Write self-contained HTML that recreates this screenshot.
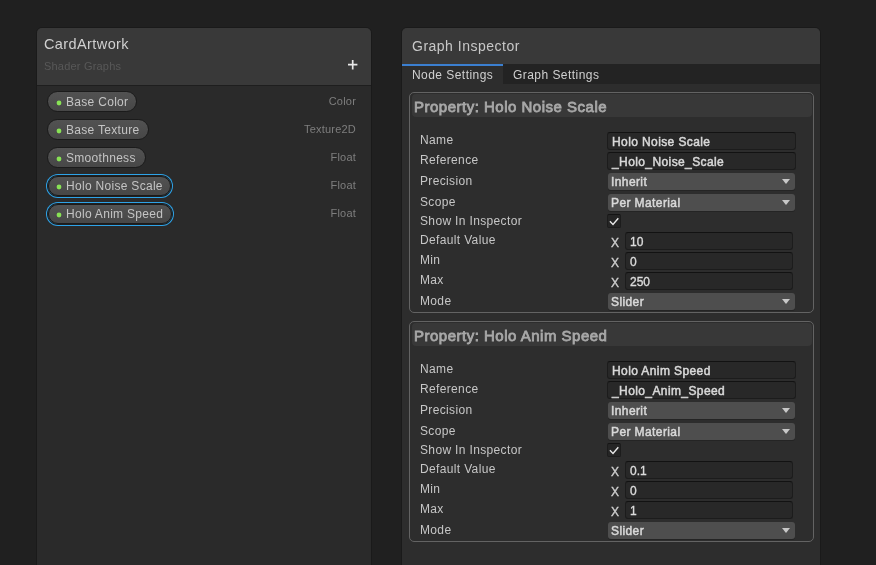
<!DOCTYPE html>
<html><head><meta charset="utf-8">
<style>
*{box-sizing:border-box;margin:0;padding:0}
html,body{width:876px;height:565px;overflow:hidden;background:#202020;font-family:"Liberation Sans",sans-serif;color:#d2d2d2}
#root{position:absolute;left:0;top:0;width:876px;height:565px;will-change:transform;background:#202020}
#lp{position:absolute;left:36px;top:27px;width:336px;height:560px;background:#2a2a2a;border:1px solid #1a1a1a;border-radius:6px;overflow:hidden}
#lph{position:absolute;left:0;top:0;width:100%;height:58px;background:#393939;border-bottom:1px solid #1e1e1e}
#lp .title{position:absolute;left:7px;top:8px;font-size:14.5px;letter-spacing:0.4px;color:#d0d0d0;white-space:nowrap}
#lp .sub{position:absolute;left:7px;top:32px;font-size:11px;letter-spacing:0.2px;color:#585858;white-space:nowrap}
#lp .plus{position:absolute;left:311px;top:32px;width:10px;height:10px}
.pill{position:absolute;left:10px;height:21px;border-radius:11px;background:linear-gradient(#525252,#474747);border:1px solid #1b1b1b;font-size:12px;letter-spacing:0.3px;color:#c4c4c4;padding-left:18px;line-height:20px;white-space:nowrap}
.pill .dot{position:absolute;left:8px;top:7.5px;width:6px;height:6px}
.pill.sel{left:11px;height:20px;border-radius:10px;padding-left:17px;line-height:18px;box-shadow:0 0 0 1px #1f1f1f,0 0 0 2px #2ea3e8}
.pill.sel .dot{left:7px;top:7px}
.type{position:absolute;right:15px;font-size:11px;letter-spacing:0.2px;color:#7e7e7e;white-space:nowrap}
#rp{position:absolute;left:401px;top:27px;width:420px;height:560px;background:#2d2d2d;border:1px solid #1a1a1a;border-radius:6px;overflow:hidden}
#rph{position:absolute;left:0;top:0;width:100%;height:36px;background:#393939}
#rph .title{position:absolute;left:10px;top:9.5px;font-size:14px;letter-spacing:0.5px;color:#c8c8c8;white-space:nowrap}
#tabs{position:absolute;left:0;top:36px;width:100%;height:20px;background:#232323}
.tab{position:absolute;top:0;height:20px;font-size:12px;letter-spacing:0.45px;color:#d0d0d0;line-height:22px;white-space:nowrap}
.tab.act{background:#2d2d2d;border-top:2px solid #3b7fd0;line-height:18px}
.box{position:absolute;left:7px;width:405px;height:221px;border:1px solid #636363;border-radius:5px}
.bh{position:absolute;left:2px;top:1px;right:1px;height:23px;background:#383838;border-radius:4px;font-size:15px;font-weight:normal;-webkit-text-stroke:0.8px #a8a8a8;letter-spacing:0.5px;color:#a8a8a8;padding-left:2px;line-height:25px;white-space:nowrap}
.lbl{position:absolute;left:10px;font-size:12px;letter-spacing:0.35px;color:#c6c6c6;white-space:nowrap}
.tf{position:absolute;left:197px;width:189px;height:18px;background:#282828;border:1px solid #1c1c1c;border-top-color:#121212;border-radius:3px;font-size:12px;font-weight:normal;-webkit-text-stroke:0.5px #d8d8d8;letter-spacing:0.4px;color:#d8d8d8;padding-left:4px;line-height:18px;white-space:nowrap}
.dd{position:absolute;left:198px;width:187px;height:17px;background:#4e4e4e;border-radius:3px;box-shadow:0 1px 0 #242424;font-size:12px;font-weight:normal;-webkit-text-stroke:0.5px #d8d8d8;letter-spacing:0.4px;color:#d8d8d8;padding-left:3px;line-height:19px;white-space:nowrap}
.dd:after{content:"";position:absolute;right:5px;top:6px;border-left:4px solid transparent;border-right:4px solid transparent;border-top:5px solid #c8c8c8}
.cb{position:absolute;left:197px;width:14px;height:14px;background:#252525;border:1px solid #1c1c1c;border-top-color:#141414;border-radius:2px}
.cb svg{position:absolute;left:1px;top:1px}
.xl{position:absolute;left:201px;font-size:12px;color:#d0d0d0;-webkit-text-stroke:0.35px #d0d0d0}
.nf{position:absolute;left:215px;width:168px;height:18px;background:#282828;border:1px solid #1c1c1c;border-top-color:#121212;border-radius:3px;font-size:12px;font-weight:normal;-webkit-text-stroke:0.35px #dcdcdc;color:#dcdcdc;padding-left:4px;line-height:19px;white-space:nowrap}
</style></head><body><div id="root">

<div id="lp">
  <div id="lph">
    <div class="title">CardArtwork</div>
    <div class="sub">Shader Graphs</div>
    <svg class="plus" viewBox="0 0 10 10"><path d="M4.7 0v9.4M0 4.7h9.4" stroke="#e8e8e8" stroke-width="1.7"/></svg>
  </div>
  <div class="pill" style="top:63px;width:90px"><svg class="dot" viewBox="0 0 6 6"><circle cx="3" cy="3" r="2.4" fill="#88e255"/></svg>Base Color</div>
  <div class="type" style="top:67px">Color</div>
  <div class="pill" style="top:91px;width:102px"><svg class="dot" viewBox="0 0 6 6"><circle cx="3" cy="3" r="2.4" fill="#88e255"/></svg>Base Texture</div>
  <div class="type" style="top:95px">Texture2D</div>
  <div class="pill" style="top:119px;width:99px"><svg class="dot" viewBox="0 0 6 6"><circle cx="3" cy="3" r="2.4" fill="#88e255"/></svg>Smoothness</div>
  <div class="type" style="top:123px">Float</div>
  <div class="pill sel" style="top:148px;width:123px"><svg class="dot" viewBox="0 0 6 6"><circle cx="3" cy="3" r="2.4" fill="#88e255"/></svg>Holo Noise Scale</div>
  <div class="type" style="top:151px">Float</div>
  <div class="pill sel" style="top:176px;width:124px"><svg class="dot" viewBox="0 0 6 6"><circle cx="3" cy="3" r="2.4" fill="#88e255"/></svg>Holo Anim Speed</div>
  <div class="type" style="top:179px">Float</div>
</div>

<div id="rp">
  <div id="rph"><div class="title">Graph Inspector</div></div>
  <div id="tabs">
    <div class="tab act" style="left:0;width:101px;padding-left:10px">Node Settings</div>
    <div class="tab" style="left:111px">Graph Settings</div>
  </div>

  <div class="box" style="top:64px">
    <div class="bh">Property: Holo Noise Scale</div>
    <div class="lbl" style="top:40px">Name</div>
    <div class="tf" style="top:39px">Holo Noise Scale</div>
    <div class="lbl" style="top:60px">Reference</div>
    <div class="tf" style="top:59px">_Holo_Noise_Scale</div>
    <div class="lbl" style="top:81px">Precision</div>
    <div class="dd" style="top:80px">Inherit</div>
    <div class="lbl" style="top:102px">Scope</div>
    <div class="dd" style="top:101px">Per Material</div>
    <div class="lbl" style="top:121px">Show In Inspector</div>
    <div class="cb" style="top:121px"><svg width="12" height="12" viewBox="0 0 12 12"><path d="M0.9 5.3L4 8.4L9.3 2.2" fill="none" stroke="#e8e8e8" stroke-width="1.4"/></svg></div>
    <div class="lbl" style="top:140px">Default Value</div>
    <div class="xl" style="top:143px">X</div><div class="nf" style="top:139px">10</div>
    <div class="lbl" style="top:160px">Min</div>
    <div class="xl" style="top:163px">X</div><div class="nf" style="top:159px">0</div>
    <div class="lbl" style="top:180px">Max</div>
    <div class="xl" style="top:183px">X</div><div class="nf" style="top:179px">250</div>
    <div class="lbl" style="top:201px">Mode</div>
    <div class="dd" style="top:200px">Slider</div>
  </div>

  <div class="box" style="top:293px">
    <div class="bh">Property: Holo Anim Speed</div>
    <div class="lbl" style="top:40px">Name</div>
    <div class="tf" style="top:39px">Holo Anim Speed</div>
    <div class="lbl" style="top:60px">Reference</div>
    <div class="tf" style="top:59px">_Holo_Anim_Speed</div>
    <div class="lbl" style="top:81px">Precision</div>
    <div class="dd" style="top:80px">Inherit</div>
    <div class="lbl" style="top:102px">Scope</div>
    <div class="dd" style="top:101px">Per Material</div>
    <div class="lbl" style="top:121px">Show In Inspector</div>
    <div class="cb" style="top:121px"><svg width="12" height="12" viewBox="0 0 12 12"><path d="M0.9 5.3L4 8.4L9.3 2.2" fill="none" stroke="#e8e8e8" stroke-width="1.4"/></svg></div>
    <div class="lbl" style="top:140px">Default Value</div>
    <div class="xl" style="top:143px">X</div><div class="nf" style="top:139px">0.1</div>
    <div class="lbl" style="top:160px">Min</div>
    <div class="xl" style="top:163px">X</div><div class="nf" style="top:159px">0</div>
    <div class="lbl" style="top:180px">Max</div>
    <div class="xl" style="top:183px">X</div><div class="nf" style="top:179px">1</div>
    <div class="lbl" style="top:201px">Mode</div>
    <div class="dd" style="top:200px">Slider</div>
  </div>
</div>
</div></body></html>
